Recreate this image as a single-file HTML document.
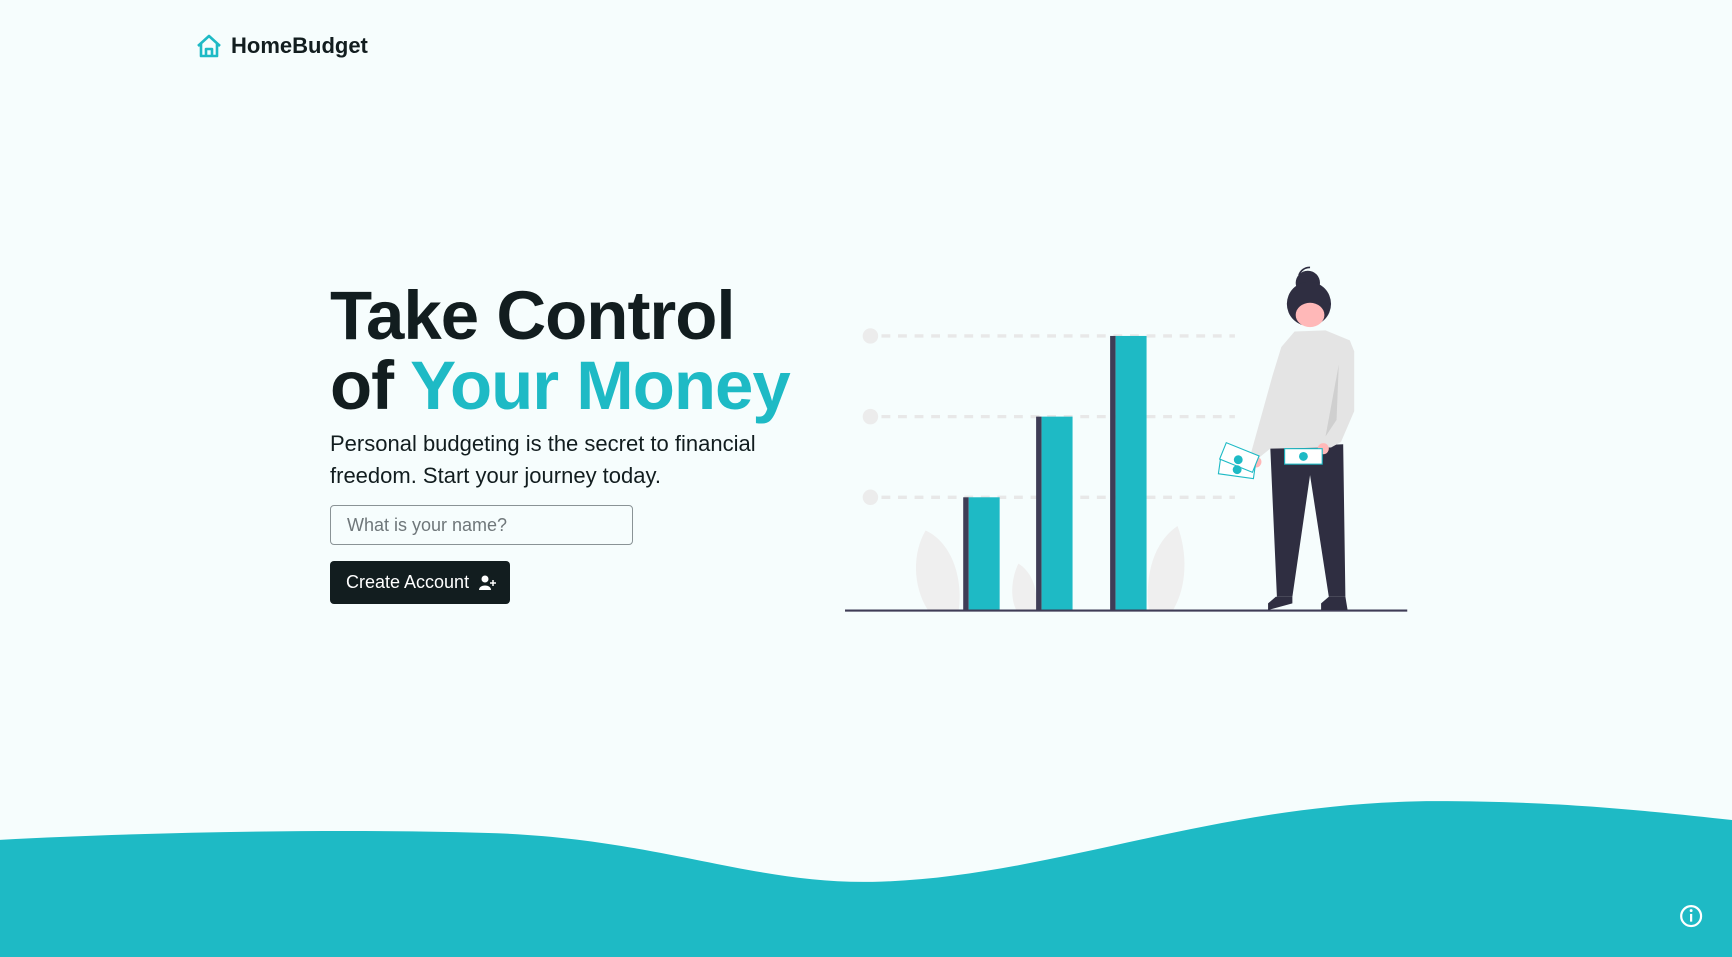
<!DOCTYPE html>
<html><head><meta charset="utf-8"><style>
html,body{margin:0;padding:0;width:1732px;height:957px;overflow:hidden;background:#f6fdfd;font-family:"Liberation Sans",Arial,sans-serif;color:#121d1f}
svg.bg{position:absolute;left:0;top:0;width:1732px;height:957px}
.logo{position:absolute;left:196px;top:33px;display:flex;align-items:center;font-weight:bold;font-size:22px;color:#121d1f}
.logo svg{margin-right:9px}
h1{position:absolute;left:330px;top:281px;margin:0;font-size:69px;line-height:70px;font-weight:bold;letter-spacing:-1px}
h1 span{color:#1ebac5}
p{position:absolute;left:330px;top:428px;margin:0;font-size:22px;line-height:32px;width:450px;color:#121d1f}
.inp{position:absolute;left:330px;top:505px;border:1px solid #8a9396;border-radius:4px;box-sizing:border-box;width:303px;height:40px;font-size:18px;color:#6f777a;padding:9px 16px;background:#f6fdfd}
.btn{position:absolute;left:330px;top:561px;width:180px;height:43px;background:#121d1f;border-radius:4px;color:#fff;font-size:18px;display:flex;align-items:center;padding-left:16px;box-sizing:border-box}
</style></head><body>
<svg class="bg" viewBox="0 0 1568 866" preserveAspectRatio="none">
<path d="M0 760 C150 752 330 750 450 754 C600 760 680 800 790 798 C950 795 1100 725 1300 725 C1420 725 1500 735 1568 742 L1568 866 L0 866Z" fill="#1ebac5"/>
<circle cx="1531" cy="829" r="9" fill="none" stroke="#fff" stroke-width="2"/>
<rect x="1530" y="827" width="2" height="7" fill="#fff"/><circle cx="1531" cy="824" r="1.3" fill="#fff"/>
<g fill="#efefef">
<path d="M838 480 C860 490 872 520 868 552 L840 552 C826 530 826 500 838 480Z"/>
<path d="M922 510 C935 518 940 535 938 552 L920 552 C914 540 916 522 922 510Z"/>
<path d="M1066 476 C1075 500 1075 530 1062 552 L1040 552 C1036 520 1045 490 1066 476Z"/>
</g>
<g stroke="#e8e8e8" stroke-width="3" stroke-dasharray="8 7">
<line x1="798" y1="304" x2="1118" y2="304"/><line x1="798" y1="377" x2="1118" y2="377"/><line x1="798" y1="450" x2="1118" y2="450"/>
</g>
<g fill="#ececec"><circle cx="788" cy="304" r="7"/><circle cx="788" cy="377" r="7"/><circle cx="788" cy="450" r="7"/></g>
<rect x="872" y="450" width="5" height="102" fill="#3f3d56"/><rect x="877" y="450" width="28" height="102" fill="#1ebac5"/>
<rect x="938" y="377" width="5" height="175" fill="#3f3d56"/><rect x="943" y="377" width="28" height="175" fill="#1ebac5"/>
<rect x="1005" y="304" width="5" height="248" fill="#3f3d56"/><rect x="1010" y="304" width="28" height="248" fill="#1ebac5"/>
<line x1="765" y1="552.5" x2="1274" y2="552.5" stroke="#3f3d56" stroke-width="2"/>
<path d="M1150 405 L1216 402 L1218 540 L1203 540 L1186 430 L1170 540 L1156 540 Z" fill="#2f2e41"/>
<path d="M1155 540 L1170 540 L1170 546 L1148 552 L1148 546Z" fill="#2f2e41"/>
<path d="M1203 540 L1218 540 L1220 552 L1196 552 L1196 546Z" fill="#2f2e41"/>
<path d="M1172 300 L1200 299 L1222 308 L1226 318 L1226 372 L1214 400 L1205 405 L1150 406 L1140 414 L1132 412 L1152 340 L1160 314Z" fill="#e4e4e4"/>
<path d="M1212 330 L1210 380 L1200 395Z" fill="#cfcfcf"/>
<circle cx="1137" cy="418" r="5" fill="#ffb8b8"/><circle cx="1198" cy="406" r="5" fill="#ffb8b8"/>
<g fill="#fff" stroke="#1ebac5" stroke-width="1">
<rect x="1104" y="415" width="32" height="16" transform="rotate(8 1120 423)"/>
<rect x="1106" y="406" width="32" height="16" transform="rotate(22 1122 414)"/>
<rect x="1163" y="406" width="34" height="14"/>
</g>
<g fill="#1ebac5"><circle cx="1120" cy="425" r="4"/><circle cx="1121" cy="416" r="4"/><circle cx="1180" cy="413" r="4"/></g>
<circle cx="1184" cy="256" r="11" fill="#2f2e41"/>
<path d="M1176 249 a10 10 0 0 1 10 -7" fill="none" stroke="#2f2e41" stroke-width="1.5"/>
<circle cx="1185" cy="275" r="20" fill="#2f2e41"/>
<ellipse cx="1186" cy="285" rx="13" ry="11" fill="#ffb8b8"/>
</svg>
<div class="logo"><svg width="26" height="24" viewBox="0 0 26 24"><path d="M2 12 L13 2 L24 12 M5 10 V22 H21 V10 M10 22 V15 H16 V22" fill="none" stroke="#1ebac5" stroke-width="2.6" stroke-linejoin="round"/></svg>HomeBudget</div>
<h1>Take Control<br>of <span>Your Money</span></h1>
<p>Personal budgeting is the secret to financial freedom. Start your journey today.</p>
<div class="inp">What is your name?</div>
<div class="btn">Create Account&nbsp;&nbsp;<svg width="18" height="16" viewBox="0 0 18 16"><circle cx="6" cy="4" r="3.5" fill="#fff"/><path d="M0 15 C0 9 12 9 12 15Z" fill="#fff"/><path d="M14 5 V11 M11 8 H17" stroke="#fff" stroke-width="1.5"/></svg></div>
</body></html>
